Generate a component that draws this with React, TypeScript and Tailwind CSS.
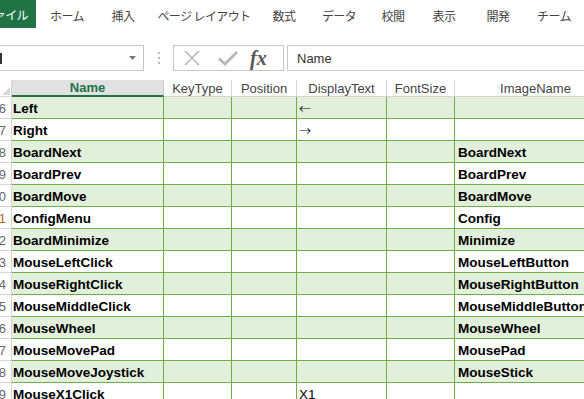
import React from "react";

const tabs: { label: string; w: string }[] = [
  { label: "ホーム", w: "w-[62px]" },
  { label: "挿入", w: "w-[50px]" },
  { label: "ページ レイアウト", w: "w-[112px]" },
  { label: "数式", w: "w-[48px]" },
  { label: "データ", w: "w-[62px]" },
  { label: "校閲", w: "w-[46px]" },
  { label: "表示", w: "w-[56px]" },
  { label: "開発", w: "w-[52px]" },
  { label: "チーム", w: "w-[60px]" },
];

type Row = { n: number; name: string; display?: string; image?: string };

const rows: Row[] = [
  { n: 6, name: "Left", display: "←" },
  { n: 7, name: "Right", display: "→" },
  { n: 8, name: "BoardNext", image: "BoardNext" },
  { n: 9, name: "BoardPrev", image: "BoardPrev" },
  { n: 10, name: "BoardMove", image: "BoardMove" },
  { n: 11, name: "ConfigMenu", image: "Config" },
  { n: 12, name: "BoardMinimize", image: "Minimize" },
  { n: 13, name: "MouseLeftClick", image: "MouseLeftButton" },
  { n: 14, name: "MouseRightClick", image: "MouseRightButton" },
  { n: 15, name: "MouseMiddleClick", image: "MouseMiddleButton" },
  { n: 16, name: "MouseWheel", image: "MouseWheel" },
  { n: 17, name: "MouseMovePad", image: "MousePad" },
  { n: 18, name: "MouseMoveJoystick", image: "MouseStick" },
  { n: 19, name: "MouseX1Click", display: "X1" },
];

const headers = [
  { label: "KeyType", w: "w-[68px]" },
  { label: "Position", w: "w-[65px]" },
  { label: "DisplayText", w: "w-[90px]" },
  { label: "FontSize", w: "w-[68px]" },
  { label: "ImageName", w: "w-[162px]" },
];

const jp = { fontFamily: '"Noto Sans CJK JP", "Noto Sans", sans-serif' };
const cell = { fontFamily: '"Liberation Sans", Arial, sans-serif' };

export default function App() {
  return (
    <div className="w-[584px] h-[399px] overflow-hidden bg-white" style={cell}>
      {/* リボンのタブ */}
      <div className="h-[29px] flex items-stretch text-[12px] tracking-[-0.6px] text-[#444]" style={jp}>
        <div className="w-[36px] shrink-0 h-[28px] bg-[#217346] text-white flex items-center justify-end pr-[8px] pt-[1px] overflow-hidden whitespace-nowrap">
          ファイル
        </div>
        {tabs.map((t) => (
          <div key={t.label} className={`${t.w} shrink-0 flex items-center justify-center pt-[3px] whitespace-nowrap`}>
            {t.label}
          </div>
        ))}
      </div>

      {/* 数式バー */}
      <div className="mt-[16px] h-[26px] flex items-stretch">
        <div className="w-[144px] shrink-0 border-y border-r border-[#c6c6c6] flex items-center justify-between pr-[7px]">
          <span className="w-[2px] h-[11px] bg-[#333]" />
          <svg width="7" height="4" viewBox="0 0 7 4">
            <path d="M0 0h7L3.5 4z" fill="#777" />
          </svg>
        </div>
        <div className="w-[29px] shrink-0 flex flex-col items-center justify-center gap-[3px]">
          <span className="w-[2px] h-[2px] bg-[#bbb]" />
          <span className="w-[2px] h-[2px] bg-[#bbb]" />
          <span className="w-[2px] h-[2px] bg-[#bbb]" />
        </div>
        <div className="w-[111px] shrink-0 border border-[#c6c6c6] flex items-center pl-[9px]">
          <svg width="18" height="16" viewBox="0 0 18 16">
            <path d="M2 1L16 15M16 1L2 15" stroke="#b8b8b8" strokeWidth="1.6" fill="none" />
          </svg>
          <svg className="ml-[17px]" width="20" height="16" viewBox="0 0 20 16">
            <path d="M1 8.5L7 14L19 2" stroke="#b8b8b8" strokeWidth="3" fill="none" />
          </svg>
          <span
            className="ml-[12px] text-[20px] italic font-bold text-[#555] leading-none"
            style={{ fontFamily: '"Liberation Serif", "Times New Roman", serif' }}
          >
            fx
          </span>
        </div>
        <div className="ml-[3px] flex-1 border-y border-l border-[#c6c6c6] flex items-center pl-[9px] pt-[2px] text-[13px] text-[#333]">
          Name
        </div>
      </div>

      {/* シート */}
      <div className="mt-[9px] flex flex-col">
        <div className="h-[17px] shrink-0 flex items-stretch text-[13px] text-[#444]">
          <div className="w-[12px] shrink-0 border-r border-b border-[#d4d4d4] flex items-end justify-end p-[1px] bg-white">
            <svg width="8" height="8" viewBox="0 0 8 8">
              <path d="M8 0V8H0z" fill="#d8d8d8" />
            </svg>
          </div>
          <div className="w-[152px] shrink-0 bg-[#e1e1e1] border-r border-[#c8c8c8] border-b-2 border-b-[#217346] flex items-center justify-center pt-[1px] font-bold text-[#217346]">
            Name
          </div>
          {headers.map((h) => (
            <div
              key={h.label}
              className={`${h.w} shrink-0 border-r border-b border-[#d4d4d4] flex items-center justify-center pt-[1px] whitespace-nowrap`}
            >
              {h.label}
            </div>
          ))}
        </div>

        {rows.map((r, i) => {
          const bg = i % 2 === 0 ? "bg-[#e2efda]" : "bg-white";
          return (
            <div key={r.n} className="h-[22px] shrink-0 flex items-stretch">
              <div
                className={`w-[12px] shrink-0 overflow-hidden border-r border-b border-[#d4d4d4] flex items-center justify-end pr-[5px] pt-[3px] text-[13px] ${
                  r.n === 11 ? "text-[#b8632a]" : "text-[#666]"
                }`}
              >
                {r.n}
              </div>
              <div className={`w-[152px] shrink-0 ${bg} border-r border-b border-[#70ad47] flex items-center pl-[1px] pt-[3px] text-[13.5px] font-bold text-black whitespace-nowrap`}>
                {r.name}
              </div>
              <div className={`w-[68px] shrink-0 ${bg} border-r border-b border-[#70ad47]`} />
              <div className={`w-[65px] shrink-0 ${bg} border-r border-b border-[#70ad47]`} />
              <div className={`w-[90px] shrink-0 ${bg} border-r border-b border-[#70ad47] flex items-center pl-[2px] pt-[3px] text-black whitespace-nowrap`}>
                {r.display === "X1" ? (
                  <span className="text-[13.5px]">X1</span>
                ) : r.display ? (
                  <span className="text-[12px] leading-none font-light" style={jp}>
                    {r.display}
                  </span>
                ) : null}
              </div>
              <div className={`w-[68px] shrink-0 ${bg} border-r border-b border-[#70ad47]`} />
              <div className={`w-[162px] shrink-0 ${bg} border-b border-[#70ad47] flex items-center pl-[3px] pt-[3px] text-[13.5px] font-bold text-black whitespace-nowrap overflow-hidden`}>
                {r.image}
              </div>
            </div>
          );
        })}
      </div>
    </div>
  );
}
